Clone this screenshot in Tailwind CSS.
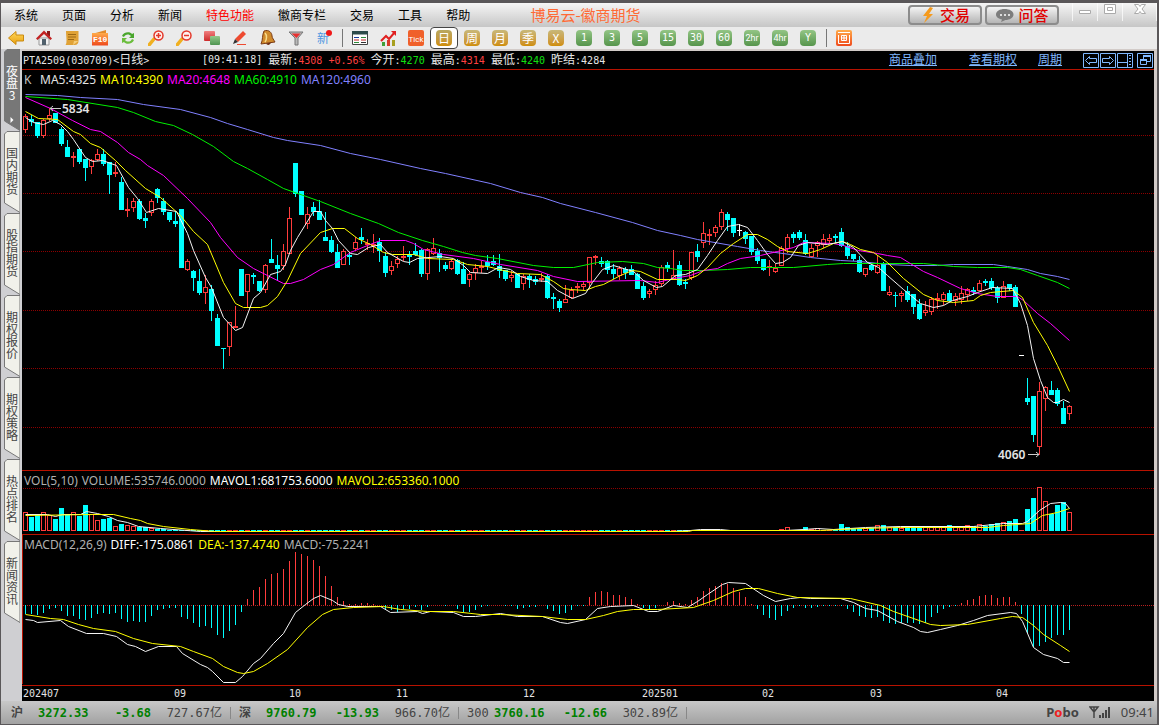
<!DOCTYPE html>
<html lang="zh-CN">

<head>
    <title>博易云-徽商期货</title>
    <meta charset="UTF-8">
    <meta name="viewport" content="width=device-width, initial-scale=1">
    <script src="https://cdn.jsdelivr.net/npm/@tailwindcss/browser@4"></script>
</head>

<body class="flex flex-col h-screen overflow-hidden bg-[#cfcfd2] border-t-3 border-t-[#5a5759] border-l border-l-[#5a5759] border-r-2 border-r-[#5a5759] border-b border-b-[#5a5759] font-['Noto_Sans_CJK_SC',sans-serif] text-xs text-black">
    <!-- shared gradients -->
    <svg class="absolute w-0 h-0" aria-hidden="true">
        <defs>
            <linearGradient id="gold" x2="0" y2="1"><stop stop-color="#ffd75a"/><stop offset="1" stop-color="#e8a010"/></linearGradient>
            <linearGradient id="orange" x2="0" y2="1"><stop stop-color="#ffab4a"/><stop offset="1" stop-color="#ef4a1c"/></linearGradient>
            <linearGradient id="red" x2="0" y2="1"><stop stop-color="#f08080"/><stop offset="1" stop-color="#cc2a2a"/></linearGradient>
            <linearGradient id="green" x2="0" y2="1"><stop stop-color="#93c98a"/><stop offset="1" stop-color="#4f9450"/></linearGradient>
        </defs>
    </svg>

    <header class="flex flex-col shrink-0">
        <div class="flex h-6 items-center bg-linear-to-b from-[#f6f6f6] to-[#c6c6c6] pl-[13px]">
            <nav class="flex flex-1 gap-6">
                <a href="#">系统</a>
                <a href="#">页面</a>
                <a href="#">分析</a>
                <a href="#">新闻</a>
                <a href="#" class="text-[#ff0000]">特色功能</a>
                <a href="#">徽商专栏</a>
                <a href="#">交易</a>
                <a href="#">工具</a>
                <a href="#">帮助</a>
            </nav>
            <h1 class="text-[15px] leading-5 text-[#ff6a35]">博易云-徽商期货</h1>
            <div class="flex flex-1 items-center justify-end">
                <button class="flex items-center justify-center gap-1 w-[74px] h-5 mr-[3px] rounded border-2 border-[#8c8c8c] bg-linear-to-b from-[#f4f4f4] to-[#b5b5b5] text-[15px] leading-4 font-medium text-[#e00000]">
                    <svg class="w-4 h-4" viewBox="0 0 16 16"><path d="M10 0 3 9h4l-3 7 9-9H9l4-6z" fill="#f59a1d"/></svg>
                    交易
                </button>
                <button class="flex items-center justify-center gap-1 w-[74px] h-5 rounded border-2 border-[#8c8c8c] bg-linear-to-b from-[#f4f4f4] to-[#b5b5b5] text-[15px] leading-4 font-medium text-[#e00000]">
                    <svg class="w-[19px] h-4" viewBox="0 0 19 16"><path d="M9.500 2c5 0 9 2.200 9 5.500s-4 5.500-8 5.500l-4.500 2 1-2.500C3.500 12 1 10 1 7.500 1 4.200 5 2 9.500 2z" fill="#7d7d7d"/><path d="M5 7h2v2H5zM9 7h2v2H9zM13 7h2v2h-2z" fill="#ddd"/></svg>
                    问答
                </button>
                <div class="flex h-6 items-start ml-[13px]">
                    <button class="w-[25px] h-[18px] border-l border-white/70 flex justify-center pt-1" aria-label="最小化">
                        <svg class="w-4 h-4" viewBox="0 0 16 16"><path d="M2.500 3.500h11v3h-11z" fill="#fff" stroke="#aaa"/></svg>
                    </button>
                    <button class="w-[25px] h-[18px] border-l border-white/70 flex justify-center" aria-label="还原">
                        <svg class="w-4 h-4" viewBox="0 0 16 16"><path d="M2.500 1.500h11v9h-11zM5.500 4.500h5v3h-5z" fill="#fff" stroke="#aaa"/></svg>
                    </button>
                    <button class="w-[35px] h-[18px] border-x border-white/70 flex justify-center" aria-label="关闭">
                        <svg class="w-4 h-4" viewBox="0 0 16 16"><path d="M2.500 1.500h4L8 3.500l1.500-2h4L10 6l3.500 4.500h-4L8 8.500l-1.500 2h-4L6 6z" fill="#fff" stroke="#aaa"/></svg>
                    </button>
                </div>
            </div>
        </div>

        <div class="flex h-[22px] items-center bg-[#ebebeb] pl-px">
            <button class="flex w-7 justify-center" aria-label="后退"><svg class="w-4 h-4" viewBox="0 0 16 16"><path d="M.5 8 8 1.500v3.500h7.500v6H8v3.500z" fill="url(#gold)" stroke="#c98a10"/></svg></button>
            <button class="flex w-7 justify-center" aria-label="首页"><svg class="w-4 h-4" viewBox="0 0 16 16"><path d="M3 8h10v7H3z" fill="#f3f3f3" stroke="#999"/><path d="M11 1h3v5h-3z" fill="#8a1a1a"/><path d="M0 8.500 8 .5l8 8-1.500 1.500L8 4 1.500 10z" fill="#c22222"/><path d="M6 9h4v6H6z" fill="#50606c"/></svg></button>
            <button class="flex w-7 justify-center" aria-label="资讯"><svg class="w-4 h-4" viewBox="0 0 16 16"><path d="M2 1h12.500v10c0 2-1 4-4 4H1.500c2-2 .5-9 .5-14z" fill="#e0a236"/><path d="M4 4.500h8M4 7h8M4 9.500h6" stroke="#9c6814"/><path d="m9 15 1-4h4.500z" fill="#f5cd78"/></svg></button>
            <button class="flex w-7 justify-center" aria-label="F10"><svg class="w-4 h-4" viewBox="0 0 16 16"><path d="M0 4 14 0v4z" fill="#e38b2b"/><path d="M0 3h16v12.500H0z" fill="url(#orange)"/><text x="1" y="12" font-size="8" font-weight="700" fill="#fff" font-family="Liberation Mono">F10</text></svg></button>
            <button class="flex w-7 justify-center" aria-label="刷新"><svg class="w-4 h-4" viewBox="0 0 16 16"><path d="M2 6c1-4 8-5 10-2l2-1v5H9l2-2C9 3.500 5 4 4 7z" fill="#49a62c"/><path d="M14 10c-1 4-8 5-10 2l-2 1V8h5l-2 2c2 2.500 6 2 7-1z" fill="#6bbd3c"/></svg></button>
            <button class="flex w-7 justify-center" aria-label="放大"><svg class="w-4 h-4" viewBox="0 0 16 16"><path d="m6 9-5 6" stroke="#f0b020" stroke-width="3.500" stroke-linecap="round"/><circle cx="10.500" cy="5.500" r="4.500" fill="#fff1ee" stroke="#e3372a" stroke-width="1.500"/><path d="M8 5.500h5M10.500 3v5" stroke="#e3372a" stroke-width="1.500"/></svg></button>
            <button class="flex w-7 justify-center" aria-label="缩小"><svg class="w-4 h-4" viewBox="0 0 16 16"><path d="m6 9-5 6" stroke="#f0b020" stroke-width="3.500" stroke-linecap="round"/><circle cx="10.500" cy="5.500" r="4.500" fill="#fff1ee" stroke="#e3372a" stroke-width="1.500"/><path d="M8 5.500h5" stroke="#e3372a" stroke-width="1.500"/></svg></button>
            <button class="flex w-7 justify-center" aria-label="叠加"><svg class="w-4 h-4" viewBox="0 0 16 16"><rect y="1" width="11" height="10" rx="1" fill="url(#red)"/><rect x="6" y="6" width="10" height="9" rx="1" fill="url(#green)"/></svg></button>
            <button class="flex w-7 justify-center" aria-label="画线"><svg class="w-4 h-4" viewBox="0 0 16 16"><path d="m3 9 8-8 3 3-8 8z" fill="#ee4a30"/><path d="M3 9 1 14l5-2z" fill="#333"/><path d="M5 14.500h9" stroke="#ee4a30"/></svg></button>
            <button class="flex w-7 justify-center" aria-label="预警"><svg class="w-4 h-4" viewBox="0 0 16 16"><path d="M4 1c5-2 8 2 8 5 0 2 2 4 3 6L1 14c2-4 1-9 3-13z" fill="#cf8a2c" stroke="#7c3c14"/><path d="M5 3c2 2 2 6 0 9" stroke="#f9dc8c" stroke-width="1.500" fill="none"/><path d="M6 13.500c1 2 4 2 5-1z" fill="#6d2c10"/></svg></button>
            <button class="flex w-7 justify-center" aria-label="筛选"><svg class="w-4 h-4" viewBox="0 0 16 16"><path d="M1 2h14L10 8v7H7V8z" fill="#b9b9b9" stroke="#777"/><path d="M3.500 3.500h9L8.500 8z" fill="#e63030"/></svg></button>
            <button class="flex w-7 justify-center" aria-label="新"><svg class="w-4 h-4 overflow-visible" viewBox="0 0 16 16"><text x="1" y="13" font-size="12" fill="#4e96e0">新</text><circle cx="13" cy="3" r="3" fill="#f01818"/></svg></button>
            <span class="flex w-2 justify-center"><i class="w-px h-[18px] bg-[#777]"></i></span>
            <button class="flex w-7 justify-center" aria-label="报价"><svg class="w-4 h-4" viewBox="0 0 16 16"><path d="M.5 1.500h15v13H.5z" fill="#fff" stroke="#444"/><path d="M0 1h16v3.500H0z" fill="#2d4b4b"/><path d="M2 7.500h5" stroke="#183c9c"/><path d="M9 7.500h5M2 12.500h5" stroke="#2c8a3a"/><path d="M2 10h5M9 10h5" stroke="#c02020"/><path d="M9 12.500h5" stroke="#333"/></svg></button>
            <button class="flex w-7 justify-center" aria-label="走势"><svg class="w-4 h-4" viewBox="0 0 16 16"><path d="M2 12h3v4H2z" fill="#3fa03a"/><path d="M7 10h3v6H7z" fill="#d83a2a"/><path d="M12 10h3v6h-3z" fill="#a8a020"/><path d="m1 11 5-5 3 3 6-7" stroke="#e02020" stroke-width="2" fill="none"/><path d="M11 1h5v5z" fill="#e02020"/></svg></button>
            <button class="flex w-7 justify-center" aria-label="Tick"><svg class="w-4 h-4" viewBox="0 0 16 16"><rect width="16" height="16" rx="2" fill="#f0602a"/><text x="8" y="12" text-anchor="middle" font-size="8" fill="#fff" font-family="Roboto">Tick</text></svg></button>
            <div class="flex" id="periods">
                <button class="flex w-7 h-[22px] items-center justify-center rounded border border-[#444] bg-white"><span class="w-4 h-4 rounded-sm bg-linear-to-b from-[#b8a860] to-[#cf8e00] leading-4 text-white">日</span></button>
                <button class="flex w-7 h-[22px] items-center justify-center"><span class="w-4 h-4 rounded-sm bg-linear-to-b from-[#c8b878] to-[#cf8e00] leading-4 text-white">周</span></button>
                <button class="flex w-7 h-[22px] items-center justify-center"><span class="w-4 h-4 rounded-sm bg-linear-to-b from-[#c8b878] to-[#cf8e00] leading-4 text-white">月</span></button>
                <button class="flex w-7 h-[22px] items-center justify-center"><span class="w-4 h-4 rounded-sm bg-linear-to-b from-[#c8b878] to-[#cf8e00] leading-4 text-white">季</span></button>
                <button class="flex w-7 h-[22px] items-center justify-center"><span class="w-4 h-4 rounded-sm bg-linear-to-b from-[#c8b878] to-[#cf8e00] leading-4 text-white">X</span></button>
                <button class="flex w-7 h-[22px] items-center justify-center"><span class="w-4 h-4 rounded-sm bg-linear-to-b from-[#93c585] to-[#56954c] font-['DejaVu_Sans_Mono',monospace] text-[10px] leading-4 text-white">1</span></button>
                <button class="flex w-7 h-[22px] items-center justify-center"><span class="w-4 h-4 rounded-sm bg-linear-to-b from-[#93c585] to-[#56954c] font-['DejaVu_Sans_Mono',monospace] text-[10px] leading-4 text-white">3</span></button>
                <button class="flex w-7 h-[22px] items-center justify-center"><span class="w-4 h-4 rounded-sm bg-linear-to-b from-[#93c585] to-[#56954c] font-['DejaVu_Sans_Mono',monospace] text-[10px] leading-4 text-white">5</span></button>
                <button class="flex w-7 h-[22px] items-center justify-center"><span class="w-4 h-4 rounded-sm bg-linear-to-b from-[#93c585] to-[#56954c] font-['DejaVu_Sans_Mono',monospace] text-[10px] leading-4 text-white">15</span></button>
                <button class="flex w-7 h-[22px] items-center justify-center"><span class="w-4 h-4 rounded-sm bg-linear-to-b from-[#93c585] to-[#56954c] font-['DejaVu_Sans_Mono',monospace] text-[10px] leading-4 text-white">30</span></button>
                <button class="flex w-7 h-[22px] items-center justify-center"><span class="w-4 h-4 rounded-sm bg-linear-to-b from-[#93c585] to-[#56954c] font-['DejaVu_Sans_Mono',monospace] text-[10px] leading-4 text-white">60</span></button>
                <button class="flex w-7 h-[22px] items-center justify-center"><span class="w-4 h-4 rounded-sm bg-linear-to-b from-[#93c585] to-[#56954c] font-[Roboto,sans-serif] text-[9px] leading-4 text-white">2hr</span></button>
                <button class="flex w-7 h-[22px] items-center justify-center"><span class="w-4 h-4 rounded-sm bg-linear-to-b from-[#93c585] to-[#56954c] font-[Roboto,sans-serif] text-[9px] leading-4 text-white">4hr</span></button>
                <button class="flex w-7 h-[22px] items-center justify-center"><span class="w-4 h-4 rounded-sm bg-linear-to-b from-[#93c585] to-[#56954c] font-['DejaVu_Sans_Mono',monospace] text-[10px] leading-4 text-white">Y</span></button>
            </div>
            <span class="flex w-2 justify-center"><i class="w-px h-[18px] bg-[#777]"></i></span>
            <button class="flex w-7 justify-center" aria-label="画"><svg class="w-4 h-4" viewBox="0 0 16 16"><rect width="16" height="16" rx="2" fill="url(#orange)"/><path d="M2 2.500h12M2.500 5v8.500h11V5M5.500 5.500h5v5h-5zM8 5.500v5M5.500 8h5" fill="none" stroke="#fff"/></svg></button>
        </div>
    </header>

    <div class="flex flex-1 min-h-0">
        <aside class="flex flex-col w-[21px] pl-[3px] pr-0.5 text-[#444]" id="tabs"></aside>

        <main class="flex flex-col flex-1 min-w-0 border-t-2 border-r-3 border-[#d2cbc8] bg-black text-[#e4e4e4]">
            <div class="flex h-[19px] shrink-0 items-center border-b border-[#b81200] pl-px font-['DejaVu_Sans_Mono','Noto_Sans_CJK_SC',monospace] text-[10px] leading-4 whitespace-pre">
                <span class="w-[179px]">PTA2509(030709)&lt;<span class="text-xs">日线</span>&gt;</span>
                <span>[09:41:18] </span>
                <span><span class="text-xs">最新</span>:<b class="font-normal text-[#ff4040]">4308 +0.56%</b> </span>
                <span><span class="text-xs">今开</span>:<b class="font-normal text-[#10e010]">4270</b> </span>
                <span><span class="text-xs">最高</span>:<b class="font-normal text-[#ff4040]">4314</b> </span>
                <span><span class="text-xs">最低</span>:<b class="font-normal text-[#10e010]">4240</b> </span>
                <span><span class="text-xs">昨结</span>:4284</span>
                <div class="flex ml-auto items-center text-xs text-[#80b8ff]">
                    <a href="#" class="underline mr-8">商品叠加</a>
                    <a href="#" class="underline mr-[21px]">查看期权</a>
                    <a href="#" class="underline mr-[21px]">周期</a>
                    <button class="mr-px" aria-label="左移"><svg class="w-4 h-[15px]" viewBox="0 0 16 15" fill="none" stroke="#80b8ff"><path d="M.5.5h15v14H.5zM2.500 7.500l4-4v2h7v4h-7v2z"/></svg></button>
                    <button class="mr-px" aria-label="右移"><svg class="w-4 h-[15px]" viewBox="0 0 16 15" fill="none" stroke="#80b8ff"><path d="M.5.5h15v14H.5zM13.500 7.500l-4-4v2h-7v4h7v2z"/></svg></button>
                    <button class="mr-1" aria-label="侧栏"><svg class="w-4 h-[15px]" viewBox="0 0 16 15" fill="none" stroke="#80b8ff"><path d="M.5.5h15v14H.5zM10.500 0v15M0 9.500h10"/><path d="M13 2v12" stroke-width="2" stroke-dasharray="1 2"/></svg></button>
                    <button class="mr-px" aria-label="窗口"><svg class="w-4 h-[15px]" viewBox="0 0 16 15" fill="none" stroke="#80b8ff"><path d="M.5.5h15v14H.5zM6.500 6V2.500h7v6H10M3.500 6.500h6v5h-6z"/><path d="M6 3h8M3 7h7" stroke-width="2"/></svg></button>
                </div>
            </div>

            <section class="relative flex-1 min-h-0 border-b border-[#b81200]">
                <svg class="block w-full h-full" id="price"></svg>
                <p class="absolute top-0.5 left-0.5 flex gap-1 font-['Noto_Sans',sans-serif] text-xs leading-4">
                    <span class="w-3 text-[#c0c0c0]">K</span>
                    <span>MA5:4325</span>
                    <span class="text-[#ffff00]">MA10:4390</span>
                    <span class="text-[#ff00ff]">MA20:4648</span>
                    <span class="text-[#00f000]">MA60:4910</span>
                    <span class="text-[#8080ff]">MA120:4960</span>
                </p>
            </section>
            <section class="relative h-16 shrink-0 border-b border-[#b81200]">
                <svg class="block w-full h-full" id="volume"></svg>
                <p class="absolute top-0.5 left-0.5 flex gap-1 font-['Noto_Sans',sans-serif] text-xs leading-4">
                    <span class="text-[#b0b0b0]">VOL(5,10)</span>
                    <span class="text-[#b0b0b0]">VOLUME:535746.0000</span>
                    <span class="text-white">MAVOL1:681753.6000</span>
                    <span class="text-[#ffff00]">MAVOL2:653360.1000</span>
                </p>
            </section>
            <section class="relative h-[151px] shrink-0 border-b border-[#b81200]">
                <svg class="block w-full h-full" id="macd"></svg>
                <p class="absolute top-0.5 left-0.5 flex gap-1 font-['Noto_Sans',sans-serif] text-xs leading-4">
                    <span class="text-[#b0b0b0]">MACD(12,26,9)</span>
                    <span class="text-white">DIFF:-175.0861</span>
                    <span class="text-[#ffff00]">DEA:-137.4740</span>
                    <span class="text-[#b0b0b0]">MACD:-75.2241</span>
                </p>
            </section>
            <svg class="block w-full h-[15px] shrink-0" id="months"></svg>
        </main>
    </div>

    <footer class="flex h-[23px] shrink-0 items-center bg-linear-to-b from-[#c8c8c8] to-[#a2a2a2] pl-2.5 pr-[3px] font-['DejaVu_Sans_Mono','Noto_Sans_CJK_SC',monospace] text-xs font-bold text-[#444]">
        <span class="w-[27px]">沪</span>
        <span class="w-[50px] text-[#008000]">3272.33</span>
        <span class="w-[63px] text-right text-[#008000]">-3.68</span>
        <span class="w-[71px] text-right font-normal">727.67亿</span>
        <i class="w-px h-3 mx-2 bg-[#888]"></i>
        <span class="w-[27px]">深</span>
        <span class="w-[50px] text-[#008000]">9760.79</span>
        <span class="w-[63px] text-right text-[#008000]">-13.93</span>
        <span class="w-[71px] text-right font-normal">966.70亿</span>
        <i class="w-px h-3 mx-2 bg-[#888]"></i>
        <span class="w-[27px] font-normal">300</span>
        <span class="w-[50px] text-[#008000]">3760.16</span>
        <span class="w-[63px] text-right text-[#008000]">-12.66</span>
        <span class="w-[71px] text-right font-normal">302.89亿</span>
        <i class="w-px h-3 mx-2 bg-[#888]"></i>
        <div class="flex ml-auto items-center gap-2.5 font-['Noto_Sans',sans-serif]">
            <span class="text-[13px]">P<span class="text-[#f02020]">o</span>bo</span>
            <svg class="w-[22px] h-3" viewBox="0 0 22 12"><path d="M1 1h8L5 6zM5 1v11" fill="none" stroke="#444" stroke-width="1.500"/><path d="M10 9h2v3h-2zM13 7h2v5h-2zM16 4h2v8h-2zM19 1h2v11h-2z" fill="#444"/></svg>
            <span class="text-[13px] font-normal">09:41</span>
        </div>
    </footer>

    <script>
        const RED = '#ff3c3c', CYAN = '#00ffff';

        // vertical page tabs
        const tabs = ['夜盘3', '国内期货', '股指期货', '期权报价', '期权策略', '热点排名', '新闻资讯'];
        document.getElementById('tabs').innerHTML = tabs.map((t, i) => `
            <button class="relative h-[82px] shrink-0 ${i ? '' : 'text-white'}">
                <svg class="absolute inset-0 w-full h-full" viewBox="0 0 16 82" preserveAspectRatio="none">
                    <path d="M16 .5H3L.5 3v69L16 81.500z" fill="${i ? '#f1f1ea' : '#777777'}" stroke="#777"/>
                </svg>
                <span class="relative flex flex-col items-center h-[66px] pt-2 text-xs leading-3">${[...t].map(c => `<span>${c}</span>`).join('')}${i ? '' : '<svg class="w-1 h-2 mt-4" viewBox="0 0 4 8"><path d="M0 0l4 4-4 4z" fill="#fff"/></svg>'}</span>
            </button>`).join('');

        // candles: direction, high, body top, body bottom, low (u = up, d = down, w = unchanged)
        const candles = `u114,116,130,133 d115,119,122,126 d122,122,136,138 u119,120,136,138 u108,115,119,121
            d113,113,123,123 d127,129,144,146 d140,147,157,157 u152,156,158,167 d148,149,162,164
            d159,159,168,181 u159,160,167,174 u149,154,160,161 d149,154,164,166 d162,162,175,194
            u162,172,174,177 d177,182,210,210 u198,209,211,217 u198,201,208,212 d199,201,219,220
            d213,218,221,228 u199,201,213,216 d188,189,198,203 d198,201,212,215 d212,212,220,222
            d212,221,224,227 d209,209,268,268 u259,261,270,271 d270,271,278,291 d269,281,293,295
            u275,287,293,304 d285,289,311,321 d314,318,346,346 d348,348,349,369 u322,322,347,356
            u306,326,328,328 d269,269,296,296 u274,274,292,307 d273,275,277,284 d281,281,291,292
            u264,265,290,293 d239,259,263,263 d255,265,269,280 u244,251,266,270 u207,218,254,254
            d163,163,194,197 d191,191,215,215 u207,214,224,229 d202,207,212,216 d200,211,220,220
            d212,237,241,241 d236,240,252,253 d244,252,268,268 u249,251,265,265 d252,255,257,265
            u237,242,249,250 d228,237,240,244 u239,243,245,250 u234,244,246,253 d238,242,251,262
            d252,256,273,277 u261,266,271,275 u256,259,264,268 u246,256,258,261 d251,255,257,265
            d243,251,255,256 d249,250,274,277 u248,249,274,280 u238,248,254,255 d249,253,258,272
            d262,265,269,271 u260,261,269,270 d259,260,274,275 d262,269,284,284 u272,274,280,287
            u264,268,273,280 u261,266,268,273 d255,262,266,270 d255,261,265,266 d254,266,271,278
            d270,270,279,281 u271,275,278,282 d274,274,288,288 u274,276,284,290 d274,276,280,288
            d276,279,282,285 u273,278,280,282 d274,276,298,299 d293,297,299,309 d299,301,308,312
            u285,299,303,303 u287,290,298,299 u283,286,288,293 u281,284,287,290 u257,257,283,289
            u255,256,258,265 d257,261,264,267 d260,261,270,274 d264,269,274,279 u266,268,276,280
            d267,269,273,279 d265,269,275,275 d273,274,289,289 d282,286,298,300 u289,291,294,298
            u281,285,290,295 u265,267,284,286 d262,265,268,272 u250,275,279,279 d261,265,285,286
            d279,282,284,289 u252,252,278,280 d244,251,257,262 u222,233,243,248 u229,234,236,245
            u225,227,233,237 u209,212,227,230 d212,214,220,231 d218,218,233,237 w224,230,231,236
            d231,232,239,244 d236,236,252,255 d248,251,261,264 d259,259,270,271 u260,266,267,276
            u264,268,272,273 u246,248,266,266 u234,237,249,253 d232,234,238,243 d230,232,238,240
            d234,240,254,255 u244,248,257,257 u241,242,246,257 u234,239,245,248 u234,238,241,244
            d234,236,238,243 d228,232,246,247 d242,246,256,259 d254,254,259,261 d256,260,272,273
            u268,268,275,277 d264,265,270,271 u255,265,273,274 d262,263,291,291 u286,292,295,296
            d292,295,296,307 u291,293,296,302 d286,291,300,302 d294,294,307,314 d299,304,319,320
            u301,310,313,316 u297,299,312,315 u293,298,300,309 u292,294,300,305 d290,293,301,302
            u293,296,301,306 u286,293,300,304 u288,289,295,301 d287,290,292,295 u280,283,291,291
            d279,281,283,286 d278,281,288,290 d286,288,298,303 u281,286,298,298 d284,284,288,291
            d285,287,307,307 w355,355,356,356 d378,398,402,405 d396,396,435,442 u382,391,447,455
            u386,387,399,411 d381,390,395,395 d388,390,404,406 d401,408,424,424 u405,406,414,420`
            .split(/\s+/).map(s => [s[0], ...s.slice(1).split(',').map(Number)]);

        const lines = {
            ma120: ['#8080ff', '25,94 57,95 80,97 117,99 143,104 180,109 210,117 227,123 247,129 273,137 287,140 320,145 350,153 380,159 420,168 445,173 490,183 520,192 542,197 560,203 595,212 632,222 657,230 680,235 697,239 737,246 760,250 790,254 810,257 840,260 860,261 887,264 910,265 937,265 953,264 993,264 1007,266 1027,269 1040,273 1057,276 1069,279'],
            ma60: ['#00f000', '25,96 67,99 117,107 133,112 155,121 173,125 192,134 213,146 233,161 247,168 267,179 283,188 320,201 350,213 378,223 398,232 422,240 443,246 462,252 475,255 497,258 533,265 553,267 573,267 597,262 622,261 643,263 657,267 670,268 683,270 703,270 727,269 750,267 793,267 827,264 843,263 923,263 953,266 977,267 1007,267 1020,269 1037,275 1057,282 1069,288'],
            ma20: ['#ff00ff', '25,97 50,108 72,120 90,129 100,131 117,142 128,152 140,159 147,165 163,175 187,198 210,222 220,237 237,257 253,268 267,275 283,283 290,283 303,279 320,269 333,264 350,252 367,245 380,240 405,240 413,243 423,249 443,254 473,258 500,264 537,270 553,276 577,281 640,280 657,282 673,278 690,275 703,270 717,268 727,263 740,258 760,255 777,251 793,247 803,242 833,243 843,245 858,250 877,253 887,255 900,257 923,271 937,277 960,288 977,293 997,296 1017,296 1023,300 1037,313 1050,323 1069,340'],
            ma10: ['#ffff00', '25,111 38,118 57,119 73,131 80,134 90,143 100,147 115,160 125,170 145,188 160,197 180,215 193,231 207,244 223,282 235,303 243,307 260,307 267,305 277,296 287,280 300,253 320,232 332,228 344,228 357,238 370,244 383,252 392,254 413,254 427,258 453,259 467,264 487,266 503,270 517,273 540,274 553,281 563,288 570,289 585,290 595,286 603,284 620,275 632,270 640,271 657,279 677,279 685,280 697,275 707,267 720,253 733,243 747,234 757,234 767,239 777,246 787,251 807,253 820,249 833,243 842,241 850,244 860,249 873,252 887,262 903,278 923,294 937,300 953,302 973,300 980,295 990,292 1013,290 1022,297 1033,322 1047,345 1057,365 1069,391'],
            ma5: ['#f4f4f4', '25,117 33,122 43,124 52,120 60,124 67,131 73,139 85,157 92,161 102,160 116,165 128,187 137,198 146,212 158,208 176,211 187,233 193,250 205,277 211,287 223,317 235,330 242,327 253,298 260,292 270,274 280,271 285,264 290,250 297,237 313,211 320,211 325,220 332,228 338,240 350,253 357,254 368,247 380,244 387,252 403,261 409,262 417,258 440,256 453,258 463,265 470,272 487,273 498,267 510,269 520,276 533,280 547,281 557,290 572,298 585,293 592,282 602,269 613,265 633,271 643,280 656,287 662,286 675,275 685,274 697,269 707,255 717,240 727,226 738,224 747,227 757,240 767,254 775,263 782,262 790,257 798,245 807,242 827,244 842,241 853,247 867,262 878,267 887,275 903,289 920,303 933,307 943,305 952,300 967,296 977,292 992,287 1012,288 1020,303 1027,325 1033,358 1040,380 1047,397 1053,402 1057,402 1063,399 1069,402'],
            vol5: ['#f4f4f4', '25,514 47,514 55,516 62,514 80,514 86,511 97,513 108,516 117,520 127,522 138,526 160,528 200,531 670,531 690,530 700,529 720,529 730,530 785,530 803,529 817,528 833,529 865,527 900,526 973,526 1003,523 1022,523 1027,521 1039,510 1050,503 1060,502 1065,503 1069,508'],
            vol10: ['#ffff00', '25,515 92,514 113,514 130,518 140,520 147,523 163,526 190,529 215,531 688,531 692,530 820,530 840,529 860,528 900,527 987,527 1003,525 1030,523 1042,515 1057,512 1069,508'],
            diff: ['#f4f4f4', '25,619 33,620 37,622 60,620 68,626 86,633 103,633 116,636 127,644 135,646 145,651 158,646 176,646 182,653 200,664 207,667 212,671 223,682 235,682 242,676 253,663 260,658 273,643 283,633 295,612 305,604 313,598 320,595 332,600 338,604 347,606 380,606 390,612 417,611 422,613 430,611 453,612 463,616 475,616 500,613 517,616 542,616 560,622 567,623 585,619 597,608 610,606 633,605 648,611 657,611 673,605 687,607 697,601 707,594 722,584 728,582 745,583 763,595 775,601 790,598 800,597 810,598 840,598 853,602 865,608 877,610 897,621 913,627 920,631 927,632 940,629 957,625 973,620 987,615 1010,612 1016,613 1022,621 1033,647 1043,654 1057,658 1063,662 1069,662'],
            dea: ['#ffff00', '25,614 50,618 63,619 78,624 93,628 115,631 133,638 152,643 180,646 193,651 212,658 223,666 237,672 243,673 253,671 267,663 287,649 307,627 322,614 333,609 353,607 383,606 400,609 427,611 453,611 480,614 500,614 542,616 567,619 585,619 603,615 617,611 633,609 657,609 693,607 713,600 733,591 745,588 758,588 777,593 797,597 850,598 880,605 893,611 913,618 930,624 940,625 967,624 1000,618 1012,616 1022,617 1033,625 1043,634 1060,645 1069,651']
        };

        const volumes = [19, 14, 16, 19, 16, 12, 23, 16, 19, 15, 26, 17, 11, 12, 13, 5, 7, 6, 5, 4, 4, 3, 2, 2, ...Array(102).fill(1),
            2, 4, 1, 1, 4, 2, 3, 1, 1, 2, 7, 4, 3, 3, 3, 3, 6, 6, 4, 4, 3, 4, 5, 5, 4, 4, 4, 4, 6, 5, 5, 6, 5, 7, 5, 7, 8, 9, 10, 12, 1, 22, 33, 44, 30, 17, 26, 29, 19];

        // histogram lengths in rows, positive hangs below the zero line
        const hist = [9, 9, 10, 8, 4, 3, 6, 11, 11, 14, 15, 13, 9, 8, 9, 8, 14, 17, 16, 17, 17, 11, 5, 4, 3, 3, 12, 14, 18, 22, 21, 23, 30, 33, 26, 20, 7,
            -6, -15, -18, -26, -31, -32, -36, -44, -53, -51, -49, -45, -39, -29, -19, -8, -4, -1, -1, -2, -2, -1, 0, 4, 5, 7, 4, 4, 2, 5, 2, 0, 0, 1, 0, 4, 7, 7, 5, 2, 1, 0, 0,
            1, 1, 4, 3, 2, 2, 0, 4, 6, 9, 8, 5, 1, 1, -8, -13, -14, -13, -10, -10, -8, -6, -1, 3, 5, 3, 0, -3, -4, -2, -1, -5, -8, -14, -17, -19, -22, -21, -17, -13, -8, -1,
            4, 10, 13, 15, 11, 6, 3, 1, 3, 3, 2, 1, 1, 1, 1, 4, 7, 11, 12, 13, 12, 16, 18, 19, 18, 18, 18, 19, 18, 12, 8, 4, 2, 1, -2, -5, -6, -9, -10, -10, -7, -8, -8, -3,
            9, 28, 42, 41, 37, 33, 30, 30, 25];

        const px = i => 25 + 6 * i;
        const rect = (x, y, w, h, c) => `<rect x="${x}" y="${y}" width="${w}" height="${h}" fill="${c}"/>`;
        const hollow = (x, y, w, h) => h < 3 ? rect(x, y, w, h, RED)
            : `<rect x="${x + .5}" y="${y + .5}" width="${w - 1}" height="${h - 1}" fill="#000" stroke="${RED}"/>`;
        const line = k => `<polyline points="${lines[k][1]}" transform="translate(.5 .5)" fill="none" stroke="${lines[k][0]}"/>`;
        const dots = (y, c) => `<line x1="1" x2="100%" y1="${y}.5" y2="${y}.5" stroke="${c}" stroke-dasharray="1 1"/>`;
        const plot = (id, top, back, body) => {
            document.getElementById(id).innerHTML = back + `<g transform="translate(-22 ${-top})">${body}</g>`;
        };

        // price
        plot('price', 70,
            [65, 123, 181, 240, 298, 357].map(y => dots(y, '#8c0000')).join(''),
            candles.map(([d, hi, a, b, lo], i) => {
                const x = px(i), c = { u: RED, d: CYAN, w: '#fff' }[d];
                return rect(x, hi, 1, lo - hi, c) + (d === 'u' ? hollow(x - 2, a, 5, b - a) : rect(x - 2, a, 5, b - a, c));
            }).join('') + ['ma120', 'ma60', 'ma20', 'ma10', 'ma5'].map(line).join('') +
            `<g stroke="#ccc" fill="none"><path d="M50 108.500h11M53 106l-3 2.500 3 2.500M1028 454.500h11M1036 452l3 2.500-3 2.500"/></g>
             <g fill="#e4e4e4" font-size="12" font-weight="600" font-family="Noto Sans"><text x="62" y="113">5834</text><text x="998" y="459">4060</text></g>`);

        // volume
        plot('volume', 471, dots(17, '#8c0000'),
            volumes.map((h, i) => candles[i][0] === 'd' ? rect(px(i) - 2, 531 - h, 5, h, CYAN) : hollow(px(i) - 2, 531 - h, 5, h)).join('') +
            line('vol5') + line('vol10'));

        // macd
        plot('macd', 535, dots(70, '#b82020') + rect(0, 0, 1, 149, '#b81200'),
            hist.map((h, i) => h > 0 ? rect(px(i), 605, 1, h, CYAN) : rect(px(i), 605 + h, 1, -h, RED)).join('') +
            line('diff') + line('dea'));

        // time axis
        plot('months', 686, '', '<g fill="#e4e4e4" font-size="10" font-family="DejaVu Sans Mono">' +
            [[23, '202407'], [174, '09'], [289, '10'], [396, '11'], [523, '12'], [642, '202501'], [762, '02'], [870, '03'], [996, '04']]
                .map(([x, t]) => `<text x="${x}" y="697">${t}</text>`).join('') + '</g>');
    </script>
</body>

</html>
